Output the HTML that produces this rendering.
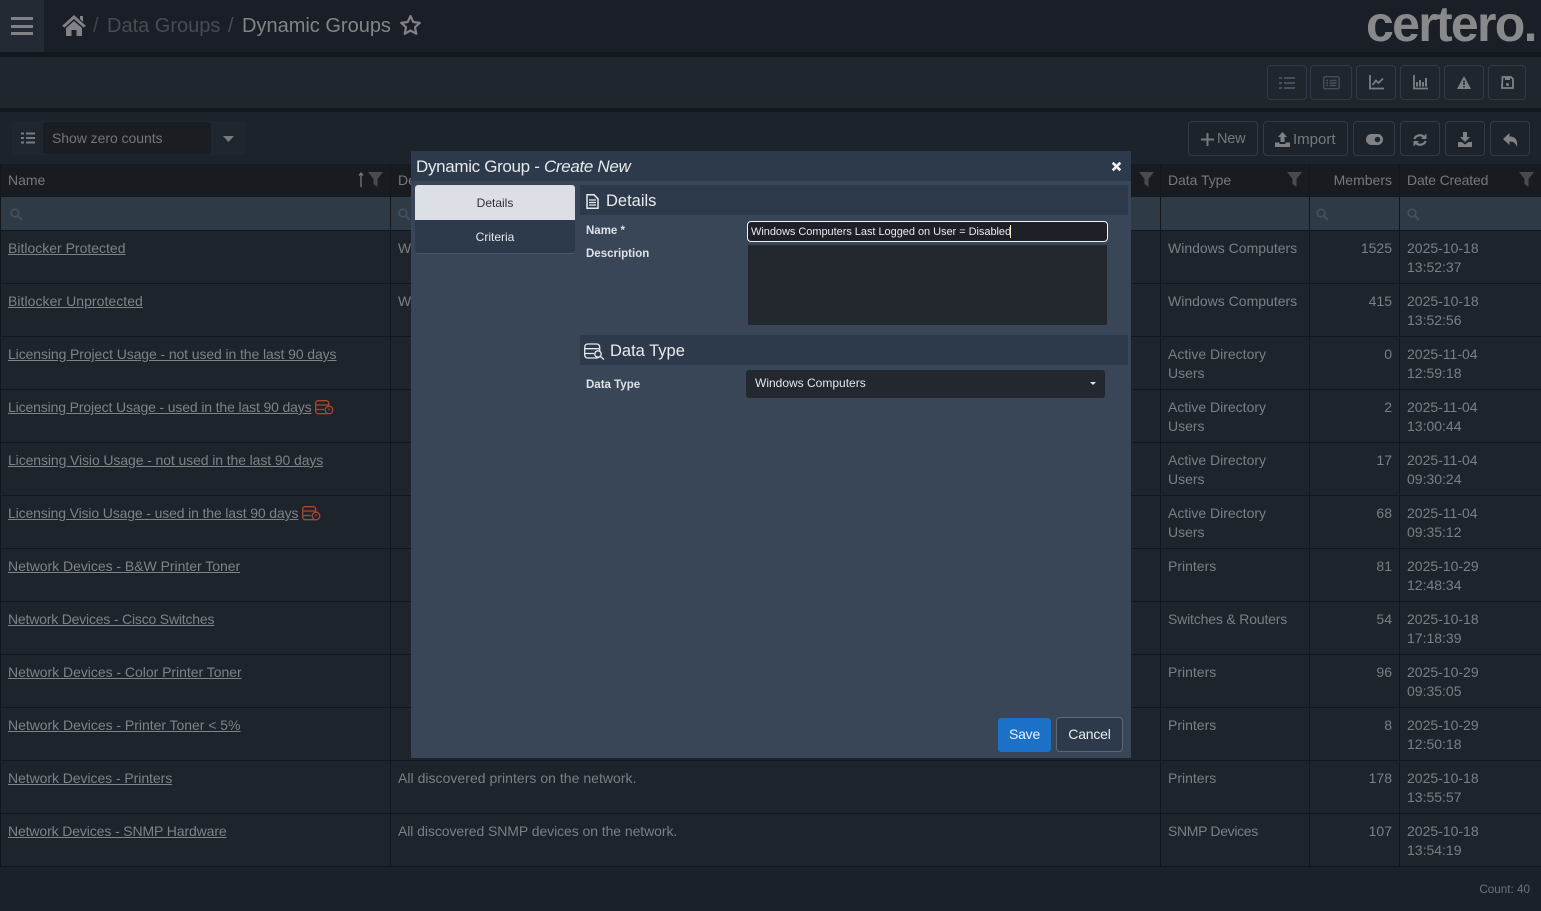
<!DOCTYPE html>
<html><head><meta charset="utf-8"><title>Dynamic Groups</title>
<style>
html,body{margin:0;padding:0;width:1541px;height:911px;overflow:hidden;background:#1d242c;font-family:"Liberation Sans",sans-serif}
.a{position:absolute}
.t{position:absolute;white-space:nowrap;font-size:14px;line-height:19px;color:#7c7f83}
.l{text-decoration:underline;color:#7f8386}
.r{text-align:right}
.h{position:absolute;height:1px;left:0;width:1541px;background:#13171c}
.v{position:absolute;width:1px;top:164px;height:703px;background:#13171c}
.b{position:absolute;box-sizing:border-box;border:1px solid #323a45;border-radius:4px;color:#77797d;font-size:14px;line-height:33px;text-align:center}
svg{position:absolute;overflow:visible}
</style></head><body>
<!-- top bar -->
<div class="a" style="left:0;top:0;width:1541px;height:52px;background:#1a1f27"></div>
<div class="a" style="left:0;top:0;width:44px;height:52px;background:#242a33"></div>
<div class="a" style="left:11px;top:17px;width:22px;height:3px;background:#808285"></div>
<div class="a" style="left:11px;top:25px;width:22px;height:3px;background:#808285"></div>
<div class="a" style="left:11px;top:32px;width:22px;height:3px;background:#808285"></div>
<svg style="left:62px;top:15px" width="24" height="22" viewBox="0 0 24 22"><path fill="#808285" d="M12 0 L24 11 L21.500 12.500 L12 4 L2.500 12.500 L0 11Z M4 13 L12 6 L20 13 V21 H14.500 V15 H9.500 V21 H4Z M18 1 h3 v6 l-3 -3Z"/></svg>
<div class="t" style="left:93px;top:13px;font-size:20px;line-height:26px;color:#3f444a">/</div>
<div class="t" style="left:107px;top:13px;font-size:20px;line-height:26px;color:#484c52">Data Groups</div>
<div class="t" style="left:228px;top:13px;font-size:20px;line-height:26px;color:#484c52">/</div>
<div class="t" style="left:242px;top:13px;font-size:20px;line-height:26px;color:#828487">Dynamic Groups</div>
<svg style="left:399px;top:14px" width="23" height="22" viewBox="0 0 23 22"><path fill="none" stroke="#808285" stroke-width="2.200" stroke-linejoin="round" d="M11.500 2 L14.300 8 L20.800 8.800 L16 13.200 L17.300 19.800 L11.500 16.500 L5.700 19.800 L7 13.200 L2.200 8.800 L8.700 8Z"/></svg>
<div class="t" style="left:1366px;top:-6px;font-size:50px;line-height:60px;font-weight:bold;color:#88898b;letter-spacing:-1.700px">certero.</div>
<!-- second bar -->
<div class="a" style="left:0;top:52px;width:1541px;height:5px;background:#14171c"></div>
<div class="a" style="left:0;top:57px;width:1541px;height:51px;background:#20262e"></div>
<div class="a" style="left:0;top:108px;width:1541px;height:4px;background:#14181d"></div>
<div class="a" style="left:0;top:112px;width:1541px;height:52px;background:#1d232b"></div>
<div class="b" style="left:1267px;top:65px;width:40px;height:35px"></div>
<div class="b" style="left:1310px;top:65px;width:42px;height:35px"></div>
<div class="b" style="left:1356px;top:65px;width:40px;height:35px"></div>
<div class="b" style="left:1400px;top:65px;width:40px;height:35px"></div>
<div class="b" style="left:1444px;top:65px;width:40px;height:35px"></div>
<div class="b" style="left:1488px;top:65px;width:38px;height:35px"></div>
<svg style="left:1279px;top:76px" width="16" height="13"><path stroke="#4a4e54" stroke-width="2" d="M0 2h3M5 2h11M0 7h3M5 7h11M0 12h3M5 12h11"/></svg>
<svg style="left:1323px;top:76px" width="17" height="14"><rect x=".7" y=".7" width="15.500" height="12" rx="1.500" fill="none" stroke="#4a4e54" stroke-width="1.400"/><path stroke="#4a4e54" stroke-width="1.400" d="M3 4.500h2M6.500 4.500h7M3 7h2M6.500 7h7M3 9.500h2M6.500 9.500h7"/></svg>
<svg style="left:1369px;top:75px" width="15" height="15"><path fill="none" stroke="#7a7d82" stroke-width="1.800" d="M1 0V13.500H15M3.500 10L7 5.500 9.500 8 14 3.500"/></svg>
<svg style="left:1413px;top:75px" width="15" height="15"><path fill="none" stroke="#7a7d82" stroke-width="1.800" d="M1 0V13.500H15"/><path stroke="#7a7d82" stroke-width="2" d="M4 11.500V7M7 11.500V5M10 11.500V7M13 11.500V3"/></svg>
<svg style="left:1457px;top:76px" width="14" height="13"><path fill="#808285" d="M7 0 L14 13 H0Z"/><path stroke="#20262e" stroke-width="1.500" d="M7 4.500v4.500M7 10v1.500"/></svg>
<svg style="left:1501px;top:76px" width="13" height="13"><path fill="none" stroke="#808285" stroke-width="1.800" d="M1.500 1H10L12 3V12H1Z"/><rect x="4" y="1" width="5" height="3" fill="#808285"/><circle cx="6.500" cy="8.500" r="1.500" fill="#808285"/></svg>
<!-- toolbar -->
<div class="a" style="left:12px;top:121px;width:234px;height:34px;background:#20262e;border-radius:3px"></div>
<div class="a" style="left:43px;top:122px;width:168px;height:32px;background:#1a1d22;border-radius:3px"></div>
<svg style="left:21px;top:132px" width="14" height="12"><path stroke="#777a7e" stroke-width="2" d="M0 1.500h3M5 1.500h9M0 6h3M5 6h9M0 10.500h3M5 10.500h9"/></svg>
<div class="t" style="left:52px;top:129px;color:#737578;letter-spacing:-.05px">Show zero counts</div>
<svg style="left:223px;top:136px" width="11" height="6"><path fill="#777a7e" d="M0 0H11L5.500 6Z"/></svg>
<div class="b" style="left:1188px;top:121px;width:70px;height:35px">&nbsp;</div>
<div class="t" style="left:1217px;top:130px;font-size:14.500px;color:#77797d;letter-spacing:-.2px">New</div>
<svg style="left:1201px;top:133px" width="13" height="13"><path stroke="#77797d" stroke-width="2" d="M6.500 0V13M0 6.500H13"/></svg>
<div class="b" style="left:1263px;top:121px;width:85px;height:35px"></div>
<div class="t" style="left:1293px;top:130px;font-size:15px;color:#77797d">Import</div>
<svg style="left:1275px;top:132px" width="15" height="15"><path fill="#808285" d="M7.500 0L12 5H9.500V10H5.500V5H3Z M0 10.500H4.500V12H10.500V10.500H15V15H0Z"/></svg>
<div class="b" style="left:1353px;top:121px;width:42px;height:35px"></div>
<svg style="left:1366px;top:134px" width="17" height="11"><rect width="17" height="11" rx="5.500" fill="#808285"/><circle cx="11.500" cy="5.500" r="2.800" fill="#20262e"/></svg>
<div class="b" style="left:1400px;top:121px;width:40px;height:35px"></div>
<svg style="left:1413px;top:133px" width="14" height="14"><path fill="none" stroke="#808285" stroke-width="2.200" d="M1.500 6C2.500 2.500 8 0.500 11.500 4.500M12.500 8C11.500 11.500 6 13.500 2.500 9.500"/><path fill="#808285" d="M13.500 0.500V6H8ZM0.500 13.500V8H6Z"/></svg>
<div class="b" style="left:1445px;top:121px;width:40px;height:35px"></div>
<svg style="left:1458px;top:132px" width="14" height="15"><path fill="#808285" d="M5 0H9V5H12L7 10 2 5H5Z M0 10H3.500L7 12.500 10.500 10H14V15H0Z"/></svg>
<div class="b" style="left:1490px;top:121px;width:40px;height:35px"></div>
<svg style="left:1503px;top:133px" width="15" height="14"><path fill="#808285" d="M6.500 0V3.500C12 3.500 15 6.500 14 14 12.500 10 10.500 8.500 6.500 8.500V12L0 6Z"/></svg>
<!-- table header -->
<div class="a" style="left:0;top:164px;width:1541px;height:33px;background:#181b20"></div>
<div class="a" style="left:0;top:197px;width:1541px;height:33px;background:#2f3a47"></div>
<div class="a" style="left:0;top:230px;width:1541px;height:1px;background:#13171c"></div>
<div class="t" style="left:8px;top:171px;color:#76787b">Name</div>
<div class="t" style="left:398px;top:171px;color:#76787b">De</div>
<div class="t" style="left:1168px;top:171px;color:#76787b;letter-spacing:-.05px">Data Type</div>
<div class="t r" style="left:1300px;width:92px;top:171px;color:#76787b">Members</div>
<div class="t" style="left:1407px;top:171px;color:#76787b;letter-spacing:-.17px">Date Created</div>
<svg style="left:358px;top:172px" width="6" height="15"><path fill="none" stroke="#77797c" stroke-width="1.300" d="M3 15V1M1 3.500L3 1 5 3.500"/></svg>
<svg style="left:368px;top:172px" width="15" height="15"><path fill="#484b50" d="M0 0H15L9.500 7V15L5.500 12V7Z"/></svg>
<svg style="left:1139px;top:172px" width="15" height="15"><path fill="#484b50" d="M0 0H15L9.500 7V15L5.500 12V7Z"/></svg>
<svg style="left:1287px;top:172px" width="15" height="15"><path fill="#484b50" d="M0 0H15L9.500 7V15L5.500 12V7Z"/></svg>
<svg style="left:1519px;top:172px" width="15" height="15"><path fill="#484b50" d="M0 0H15L9.500 7V15L5.500 12V7Z"/></svg>
<svg style="left:10px;top:208px" width="13" height="13"><circle cx="5" cy="5" r="3.800" fill="none" stroke="#464f5b" stroke-width="1.700"/><path stroke="#464f5b" stroke-width="2" d="M8 8L12 12"/></svg>
<svg style="left:1316px;top:208px" width="13" height="13"><circle cx="5" cy="5" r="3.800" fill="none" stroke="#464f5b" stroke-width="1.700"/><path stroke="#464f5b" stroke-width="2" d="M8 8L12 12"/></svg>
<svg style="left:1407px;top:208px" width="13" height="13"><circle cx="5" cy="5" r="3.800" fill="none" stroke="#464f5b" stroke-width="1.700"/><path stroke="#464f5b" stroke-width="2" d="M8 8L12 12"/></svg>
<svg style="left:398px;top:208px" width="13" height="13"><circle cx="5" cy="5" r="3.800" fill="none" stroke="#464f5b" stroke-width="1.700"/><path stroke="#464f5b" stroke-width="2" d="M8 8L12 12"/></svg>
<!-- grid -->
<div class="v" style="left:390px"></div><div class="v" style="left:1160px"></div><div class="v" style="left:1309px"></div><div class="v" style="left:1399px"></div>
<div class="h" style="top:283px"></div><div class="h" style="top:336px"></div><div class="h" style="top:389px"></div><div class="h" style="top:442px"></div><div class="h" style="top:495px"></div><div class="h" style="top:548px"></div><div class="h" style="top:601px"></div><div class="h" style="top:654px"></div><div class="h" style="top:707px"></div><div class="h" style="top:760px"></div><div class="h" style="top:813px"></div><div class="h" style="top:866px"></div>
<div class="a" style="left:0;top:867px;width:1541px;height:44px;background:#1b2128"></div>
<div class="a" style="left:0;top:164px;width:1px;height:703px;background:#13171c"></div>
<!-- rows -->
<div class="t l" style="left:8px;top:239px">Bitlocker Protected</div>
<div class="t" style="left:398px;top:239px">W</div>
<div class="t" style="left:1168px;top:239px">Windows Computers</div>
<div class="t r" style="left:1320px;width:72px;top:239px">1525</div>
<div class="t" style="left:1407px;top:239px">2025-10-18</div><div class="t" style="left:1407px;top:258px">13:52:37</div>

<div class="t l" style="left:8px;top:292px;letter-spacing:.05px">Bitlocker Unprotected</div>
<div class="t" style="left:398px;top:292px">W</div>
<div class="t" style="left:1168px;top:292px">Windows Computers</div>
<div class="t r" style="left:1320px;width:72px;top:292px">415</div>
<div class="t" style="left:1407px;top:292px">2025-10-18</div><div class="t" style="left:1407px;top:311px">13:52:56</div>

<div class="t l" style="left:8px;top:345px;letter-spacing:-.1px">Licensing Project Usage - not used in the last 90 days</div>
<div class="t" style="left:1168px;top:345px">Active Directory</div><div class="t" style="left:1168px;top:364px">Users</div>
<div class="t r" style="left:1320px;width:72px;top:345px">0</div>
<div class="t" style="left:1407px;top:345px">2025-11-04</div><div class="t" style="left:1407px;top:364px">12:59:18</div>

<div class="t l" style="left:8px;top:398px;letter-spacing:-.14px">Licensing Project Usage - used in the last 90 days</div>
<svg style="left:315px;top:400px" width="19" height="15" viewBox="0 0 19 15"><g fill="none" stroke="#a84a28" stroke-width="1.300"><rect x=".7" y=".7" width="13" height="13" rx="2.500"/><path d="M1 5H13.500M1 9.500H9"/><circle cx="14" cy="10" r="3.800" fill="#1d242c"/><path d="M14 8.500v2"/></g></svg>
<div class="t" style="left:1168px;top:398px">Active Directory</div><div class="t" style="left:1168px;top:417px">Users</div>
<div class="t r" style="left:1320px;width:72px;top:398px">2</div>
<div class="t" style="left:1407px;top:398px">2025-11-04</div><div class="t" style="left:1407px;top:417px">13:00:44</div>

<div class="t l" style="left:8px;top:451px;letter-spacing:-.1px">Licensing Visio Usage - not used in the last 90 days</div>
<div class="t" style="left:1168px;top:451px">Active Directory</div><div class="t" style="left:1168px;top:470px">Users</div>
<div class="t r" style="left:1320px;width:72px;top:451px">17</div>
<div class="t" style="left:1407px;top:451px">2025-11-04</div><div class="t" style="left:1407px;top:470px">09:30:24</div>

<div class="t l" style="left:8px;top:504px;letter-spacing:-.14px">Licensing Visio Usage - used in the last 90 days</div>
<svg style="left:302px;top:506px" width="19" height="15" viewBox="0 0 19 15"><g fill="none" stroke="#a84a28" stroke-width="1.300"><rect x=".7" y=".7" width="13" height="13" rx="2.500"/><path d="M1 5H13.500M1 9.500H9"/><circle cx="14" cy="10" r="3.800" fill="#1d242c"/><path d="M14 8.500v2"/></g></svg>
<div class="t" style="left:1168px;top:504px">Active Directory</div><div class="t" style="left:1168px;top:523px">Users</div>
<div class="t r" style="left:1320px;width:72px;top:504px">68</div>
<div class="t" style="left:1407px;top:504px">2025-11-04</div><div class="t" style="left:1407px;top:523px">09:35:12</div>

<div class="t l" style="left:8px;top:557px;letter-spacing:-.03px">Network Devices - B&amp;W Printer Toner</div>
<div class="t" style="left:1168px;top:557px">Printers</div>
<div class="t r" style="left:1320px;width:72px;top:557px">81</div>
<div class="t" style="left:1407px;top:557px">2025-10-29</div><div class="t" style="left:1407px;top:576px">12:48:34</div>

<div class="t l" style="left:8px;top:610px;letter-spacing:-.19px">Network Devices - Cisco Switches</div>
<div class="t" style="left:1168px;top:610px;letter-spacing:-.17px">Switches &amp; Routers</div>
<div class="t r" style="left:1320px;width:72px;top:610px">54</div>
<div class="t" style="left:1407px;top:610px">2025-10-18</div><div class="t" style="left:1407px;top:629px">17:18:39</div>

<div class="t l" style="left:8px;top:663px;letter-spacing:-.03px">Network Devices - Color Printer Toner</div>
<div class="t" style="left:1168px;top:663px">Printers</div>
<div class="t r" style="left:1320px;width:72px;top:663px">96</div>
<div class="t" style="left:1407px;top:663px">2025-10-29</div><div class="t" style="left:1407px;top:682px">09:35:05</div>

<div class="t l" style="left:8px;top:716px;letter-spacing:-.03px">Network Devices - Printer Toner &lt; 5%</div>
<div class="t" style="left:1168px;top:716px">Printers</div>
<div class="t r" style="left:1320px;width:72px;top:716px">8</div>
<div class="t" style="left:1407px;top:716px">2025-10-29</div><div class="t" style="left:1407px;top:735px">12:50:18</div>

<div class="t l" style="left:8px;top:769px;letter-spacing:-.06px">Network Devices - Printers</div>
<div class="t" style="left:398px;top:769px;letter-spacing:.03px">All discovered printers on the network.</div>
<div class="t" style="left:1168px;top:769px">Printers</div>
<div class="t r" style="left:1320px;width:72px;top:769px">178</div>
<div class="t" style="left:1407px;top:769px">2025-10-18</div><div class="t" style="left:1407px;top:788px">13:55:57</div>

<div class="t l" style="left:8px;top:822px;letter-spacing:-.12px">Network Devices - SNMP Hardware</div>
<div class="t" style="left:398px;top:822px;letter-spacing:-.07px">All discovered SNMP devices on the network.</div>
<div class="t" style="left:1168px;top:822px;letter-spacing:-.33px">SNMP Devices</div>
<div class="t r" style="left:1320px;width:72px;top:822px">107</div>
<div class="t" style="left:1407px;top:822px">2025-10-18</div><div class="t" style="left:1407px;top:841px">13:54:19</div>

<div class="t r" style="left:1430px;width:100px;top:880px;font-size:11.700px;color:#6f7276">Count: 40</div>

<!-- modal -->
<div class="a" style="left:411px;top:151px;width:720px;height:607px;background:#384657"></div>
<div class="a" style="left:411px;top:151px;width:720px;height:30px;background:#2d3a4b"></div>
<div class="t" style="left:416px;top:157px;font-size:17px;line-height:20px;color:#e6e8eb;letter-spacing:-.33px">Dynamic Group - <i>Create New</i></div>
<svg style="left:1112px;top:162px" width="9" height="9"><path stroke="#f0f1f3" stroke-width="2.600" d="M.7 .7L8.300 8.300M8.300 .7L.7 8.300"/></svg>
<div class="a" style="left:415px;top:185px;width:160px;height:35px;background:#dce0e6;border-radius:3px 3px 0 0"></div>
<div class="a" style="left:415px;top:220px;width:160px;height:33px;background:#2d3a4b;border-bottom:1px solid #4b5868;border-radius:0 0 3px 3px"></div>
<div class="t" style="left:415px;width:160px;text-align:center;top:194px;font-size:12px;color:#2b2f36">Details</div>
<div class="t" style="left:415px;width:160px;text-align:center;top:228px;font-size:12px;color:#e6e8eb">Criteria</div>
<div class="a" style="left:580px;top:185px;width:548px;height:30px;background:#2d3a4b"></div>
<svg style="left:586px;top:194px" width="13" height="15" viewBox="0 0 13 15"><path fill="none" stroke="#e8eaed" stroke-width="1.500" d="M1 .8H8L12 4.800V14.200H1Z"/><path stroke="#e8eaed" stroke-width="1.300" d="M3 6H10M3 8.500H10M3 11H10"/></svg>
<div class="t" style="left:606px;top:191px;font-size:16.500px;line-height:21px;color:#e8eaed">Details</div>
<div class="t" style="left:586px;top:222px;font-size:11.500px;font-weight:bold;color:#dfe2e6">Name *</div>
<div class="t" style="left:586px;top:245px;font-size:11.500px;font-weight:bold;color:#dfe2e6">Description</div>
<div class="a" style="left:747px;top:221px;width:361px;height:21px;box-sizing:border-box;background:#1d2026;border:1.500px solid #f2f3f4;border-radius:4px"></div>
<div class="t" style="left:751px;top:223px;font-size:11px;color:#e8eaed;letter-spacing:-.04px">Windows Computers Last Logged on User = Disabled</div>
<div class="a" style="left:1010px;top:225px;width:1px;height:13px;background:#f5e9c8"></div>
<div class="a" style="left:748px;top:245px;width:359px;height:80px;background:#23272e"></div>
<div class="a" style="left:580px;top:335px;width:548px;height:30px;background:#2d3a4b"></div>
<svg style="left:584px;top:343px" width="21" height="17" viewBox="0 0 21 17"><g fill="none" stroke="#e8eaed" stroke-width="1.300"><rect x=".7" y="1" width="15" height="14" rx="3"/><path d="M1 5.700H15M1 10.500H10"/><circle cx="14" cy="11" r="3.200" fill="#2d3a4b"/><path d="M16.500 13.500L20 16.500"/></g></svg>
<div class="t" style="left:610px;top:341px;font-size:16.500px;line-height:21px;color:#e8eaed">Data Type</div>
<div class="t" style="left:586px;top:376px;font-size:11.500px;font-weight:bold;color:#dfe2e6">Data Type</div>
<div class="a" style="left:746px;top:370px;width:359px;height:28px;background:#23272e;border-radius:3px"></div>
<div class="t" style="left:755px;top:374px;font-size:12px;color:#e4e6e9">Windows Computers</div>
<svg style="left:1090px;top:382px" width="6" height="3"><path fill="#e4e6e9" d="M0 0H6L3 3Z"/></svg>
<div class="a" style="left:998px;top:718px;width:53px;height:34px;background:#1b70c8;border-radius:3px"></div>
<div class="t" style="left:998px;width:53px;text-align:center;top:725px;font-size:14px;color:#e9f2fb;letter-spacing:-.2px">Save</div>
<div class="a" style="left:1056px;top:717px;width:67px;height:35px;box-sizing:border-box;background:#2d3a4b;border:1px solid #5c6878;border-radius:4px"></div>
<div class="t" style="left:1056px;width:67px;text-align:center;top:725px;font-size:14px;color:#e9ebee;letter-spacing:-.2px">Cancel</div>
</body></html>
